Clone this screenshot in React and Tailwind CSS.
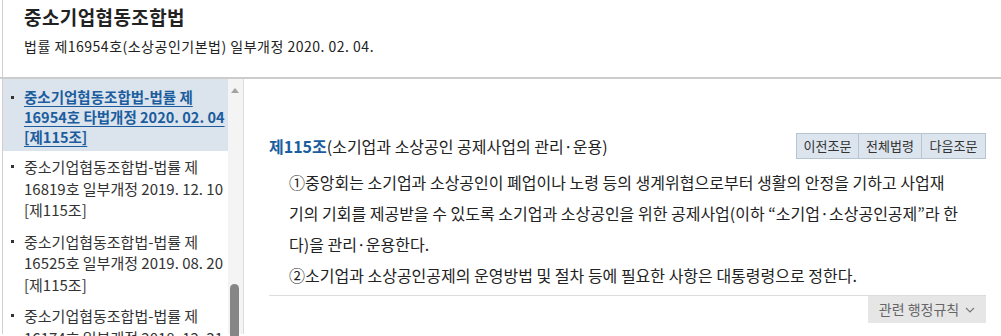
import React from "react";

const items = [
  { l: ["중소기업협동조합법-법률 제", "16954호 타법개정 2020. 02. 04", "[제115조]"], active: true },
  { l: ["중소기업협동조합법-법률 제", "16819호 일부개정 2019. 12. 10", "[제115조]"] },
  { l: ["중소기업협동조합법-법률 제", "16525호 일부개정 2019. 08. 20", "[제115조]"] },
  { l: ["중소기업협동조합법-법률 제", "16174호 일부개정 2018. 12. 31", "[제115조]"] },
];

export default function App() {
  return (
    <div className="w-[1001px] h-[336px] overflow-hidden bg-white text-[#333] font-['Noto_Sans_CJK_KR','Noto_Sans',sans-serif]">
      <header className="h-[77px] ml-[2px] border-l border-[#d0d0d0] pl-[21px] pt-[3px]">
        <h1 className="text-[19px] font-bold leading-[28px] tracking-[0.4px] text-[#222]">중소기업협동조합법</h1>
        <p className="mt-[5px] text-[14px] leading-[20px] tracking-[0.5px] text-[#222]">법률 제16954호(소상공인기본법) 일부개정 2020. 02. 04.</p>
      </header>
      <div className="flex border-t-2 border-[#cccccc] h-[257px]">
        <aside className="w-[242px] ml-[2px] border-l border-[#d0d0d0] border-r border-r-[#dcdcdc] flex shrink-0">
          <ul className="w-[225px] shrink-0">
            {items.map((it, i) => (
              <li
                key={i}
                className={`flex pl-[8px] pr-[2px] ${it.active ? "bg-[#dbe4ec] pt-[8px] pb-[4px]" : "pt-[5px] pb-[5px]"}`}
              >
                <span className="mt-[9px] w-[3px] h-[3px] shrink-0 bg-[#333]" />
                <div className={`ml-[10px] whitespace-nowrap ${it.active ? "text-[14.5px] leading-[20px] text-[#1b5d9e] font-semibold underline underline-offset-[3px]" : "text-[15px] leading-[21.5px] text-[#333]"}`}>
                  {it.l.map((t, j) => (
                    <div key={j}>{t}</div>
                  ))}
                </div>
              </li>
            ))}
          </ul>
          <div className="relative w-[15px] bg-[#f4f4f4]">
            <div className="absolute left-[3px] top-[9px] w-0 h-0 border-l-[4px] border-r-[4px] border-b-[5px] border-l-transparent border-r-transparent border-b-[#a3a3a3]" />
            <div className="absolute left-[2px] top-[205px] w-[9px] h-[60px] rounded-t-full bg-[#868686]" />
          </div>
        </aside>
        <main className="flex-1 pl-[25px] pr-[15px] pt-[54px]">
          <div className="flex items-center justify-between">
            <div className="text-[16px] leading-[24px] text-[#222]">
              <span className="font-bold text-[#1b5d9e]">제115조</span>(소기업과 소상공인 공제사업의 관리·운용)
            </div>
            <div className="flex border border-[#b7c5d3] bg-[#dce4ed] h-[26px] text-[13px] text-[#333]">
              <button className="w-[62px] border-r border-[#b7c5d3]">이전조문</button>
              <button className="w-[63px] border-r border-[#b7c5d3]">전체법령</button>
              <button className="w-[63px]">다음조문</button>
            </div>
          </div>
          <div className="pl-[20px] mt-[8px] text-[16px] leading-[31px] text-[#222] whitespace-nowrap">
            <div>①중앙회는 소기업과 소상공인이 폐업이나 노령 등의 생계위협으로부터 생활의 안정을 기하고 사업재</div>
            <div>기의 기회를 제공받을 수 있도록 소기업과 소상공인을 위한 공제사업(이하 “소기업·소상공인공제”라 한</div>
            <div>다)을 관리·운용한다.</div>
            <div>②소기업과 소상공인공제의 운영방법 및 절차 등에 필요한 사항은 대통령령으로 정한다.</div>
          </div>
          <div className="mt-[4px] border-t border-[#dddddd] flex justify-end">
            <button className="w-[118px] h-[27px] bg-[#e6e6e6] text-[14px] text-[#666] flex items-center justify-center gap-[6px]">
              관련 행정규칙
              <svg width="10" height="6" viewBox="0 0 10 6" fill="none" stroke="#777" strokeWidth="1.1"><path d="M1 1l4 4 4-4" /></svg>
            </button>
          </div>
        </main>
      </div>
    </div>
  );
}
